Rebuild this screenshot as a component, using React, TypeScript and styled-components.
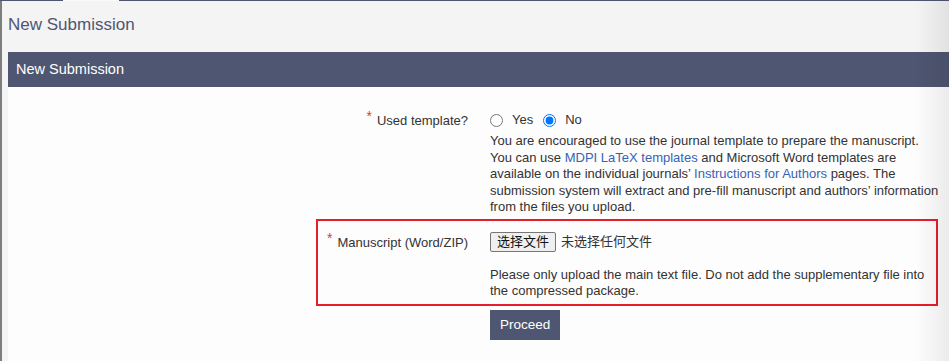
import React from 'react';
import styled, { createGlobalStyle } from 'styled-components';

const GlobalStyle = createGlobalStyle`
  html, body {
    margin: 0;
    padding: 0;
    background: #f4f4f4;
  }
  body {
    font-family: "Liberation Sans", Arial, "Noto Sans CJK SC", sans-serif;
    font-size: 13px;
    color: #333;
  }
`;

const Page = styled.div`
  min-height: 100vh;
  border-left: 2px solid #7d7d7d;
  box-sizing: border-box;
  display: flex;
  flex-direction: column;
`;

const TabLine = styled.div`
  display: flex;
  height: 1px;
  margin-left: -2px;
`;

const TabSegment = styled.div<{ $active?: boolean; $width?: number }>`
  height: 1px;
  background: ${p => (p.$active ? '#fafafa' : '#4f5671')};
  ${p => (p.$width ? `width: ${p.$width}px;` : 'flex: 1;')}
`;

const Title = styled.h1`
  margin: 14px 0 17px 6px;
  font-size: 17px;
  line-height: 20px;
  font-weight: normal;
  color: #4f5671;
`;

const Panel = styled.section`
  margin-left: 6px;
  flex: 1;
  display: flex;
  flex-direction: column;
  background: #fdfdfd;
`;

const PanelHeader = styled.div`
  height: 35px;
  line-height: 35px;
  padding-left: 8px;
  background: #4f5671;
  color: #fff;
  font-size: 14.5px;
`;

const Form = styled.form`
  padding: 10px 0 20px 308px;
`;

const Row = styled.div<{ $highlight?: boolean }>`
  display: grid;
  grid-template-columns: 150px 446px;
  column-gap: 22px;
  width: fit-content;
  padding: 11px 0 ${p => (p.$highlight ? 4 : 1)}px;
  border: 2px solid ${p => (p.$highlight ? '#e61e2b' : 'transparent')};
`;

const Label = styled.label`
  text-align: right;
  line-height: 20px;
  color: #333;
`;

const Required = styled.span`
  position: relative;
  top: -4px;
  margin-right: 5px;
  color: #d63a3f;
  font-size: 14px;
`;

const Field = styled.div`
  display: flex;
  flex-direction: column;
  align-items: flex-start;
`;

const RadioGroup = styled.div`
  display: flex;
  align-items: center;
  height: 20px;
  margin-bottom: 3px;
`;

const RadioOption = styled.label`
  display: flex;
  align-items: center;
  gap: 9px;
  margin-right: 10px;
  line-height: 20px;

  input {
    width: 13px;
    height: 13px;
    margin: 0;
  }
`;

const Hint = styled.p<{ $gap?: number }>`
  margin: ${p => p.$gap ?? 0}px 0 0;
  width: 452px;
  line-height: 16.5px;
  color: #333;
`;

const Link = styled.a`
  color: #3a62b3;
  text-decoration: none;
`;

const FileLine = styled.div`
  display: flex;
  align-items: center;
  gap: 5px;
  height: 20px;
`;

const FileButton = styled.button`
  height: 20px;
  padding: 0 6px;
  border: 1px solid #767676;
  border-radius: 2px;
  background: #efefef;
  color: #111;
  font-family: "Liberation Sans", Arial, "Noto Sans CJK SC", sans-serif;
  font-size: 13px;
  line-height: 18px;
`;

const FileStatus = styled.span`
  color: #333;
  line-height: 20px;
`;

const Actions = styled.div`
  padding-left: 174px;
  margin-top: 4px;
`;

const Submit = styled.button`
  height: 30px;
  padding: 0 10px;
  border: none;
  background: #4f5671;
  color: #fff;
  font-family: "Liberation Sans", Arial, sans-serif;
  font-size: 13.5px;
`;

const EdgeShade = styled.div`
  position: fixed;
  top: 0;
  right: 0;
  bottom: 0;
  width: 34px;
  pointer-events: none;
  background: linear-gradient(to right, rgba(0, 0, 0, 0), rgba(0, 0, 0, 0.07));
`;

export default function App() {
  return (
    <>
      <GlobalStyle />
      <Page>
        <TabLine>
          <TabSegment $width={63} />
          <TabSegment $width={56} $active />
          <TabSegment />
        </TabLine>
        <Title>New Submission</Title>
        <Panel>
          <PanelHeader>New Submission</PanelHeader>
          <Form onSubmit={e => e.preventDefault()}>
            <Row>
              <Label>
                <Required>*</Required>Used template?
              </Label>
              <Field>
                <RadioGroup>
                  <RadioOption>
                    <input type="radio" name="template" value="yes" />
                    Yes
                  </RadioOption>
                  <RadioOption>
                    <input type="radio" name="template" value="no" defaultChecked />
                    No
                  </RadioOption>
                </RadioGroup>
                <Hint>
                  You are encouraged to use the journal template to prepare the manuscript. You can
                  use <Link href="#">MDPI LaTeX templates</Link> and Microsoft Word templates are
                  available on the individual journals’ <Link href="#">Instructions for Authors</Link>{' '}
                  pages. The submission system will extract and pre-fill manuscript and authors’
                  information from the files you upload.
                </Hint>
              </Field>
            </Row>
            <Row $highlight>
              <Label>
                <Required>*</Required>Manuscript (Word/ZIP)
              </Label>
              <Field>
                <FileLine>
                  <FileButton type="button">选择文件</FileButton>
                  <FileStatus>未选择任何文件</FileStatus>
                </FileLine>
                <Hint $gap={15}>
                  Please only upload the main text file. Do not add the supplementary file into the
                  compressed package.
                </Hint>
              </Field>
            </Row>
            <Actions>
              <Submit type="submit">Proceed</Submit>
            </Actions>
          </Form>
        </Panel>
        <EdgeShade />
      </Page>
    </>
  );
}
